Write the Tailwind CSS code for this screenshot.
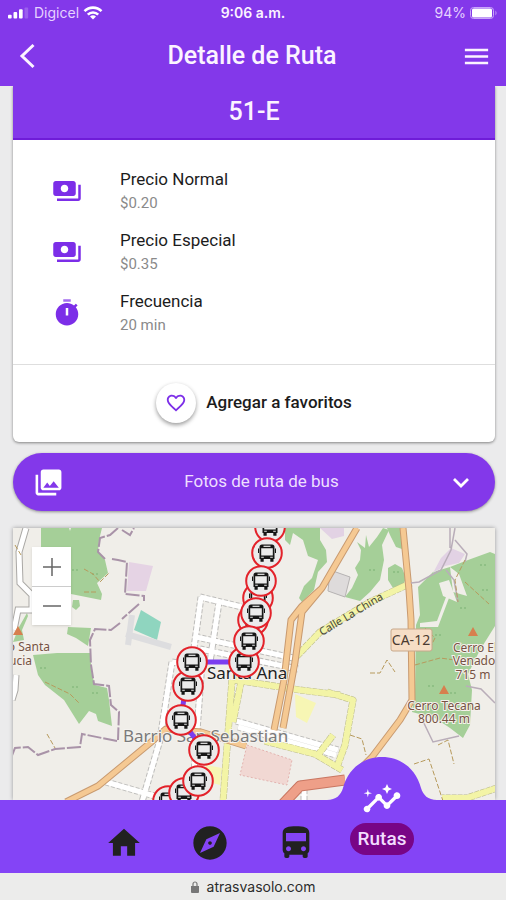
<!DOCTYPE html>
<html lang="es">
  <head>
    <meta charset="UTF-8" />
    <meta name="viewport" content="width=device-width, initial-scale=1.0" />
    <title>Detalle de Ruta</title>
    <script src="https://cdn.jsdelivr.net/npm/@tailwindcss/browser@4"></script>
  </head>
  <body class="bg-[#ebebec] font-['Roboto',sans-serif]">
    <div class="flex flex-col h-screen overflow-hidden">
      <header class="bg-[#8338ea] text-[#fbf3ff] shrink-0">
        <div class="grid grid-cols-3 items-center h-[26px] px-2 font-['Inter',sans-serif] text-sm">
          <div class="flex items-center gap-1 text-[#e6d2ff]">
            <svg class="w-[22px] h-3" viewBox="0 0 24 12" fill="#fff">
              <rect x="0" y="8" width="4" height="4" rx="1" />
              <rect x="6" y="5" width="4" height="7" rx="1" />
              <rect x="12" y="2" width="4" height="10" rx="1" />
              <rect x="18" y="0" width="4" height="12" rx="1" opacity=".2" />
            </svg>
            <span>Digicel</span>
            <svg class="w-5 h-4" viewBox="0 0 20 16" fill="none" stroke="#fff" stroke-width="2.6">
              <path d="M1.500 6.200a12 12 0 0 1 17 0M4.800 9.600a7.400 7.400 0 0 1 10.400 0" />
              <path d="M10 14.600l-3-3a4.300 4.300 0 0 1 6 0z" fill="#fff" stroke="none" />
            </svg>
          </div>
          <span class="text-center font-semibold">9:06 a.m.</span>
          <div class="flex items-center justify-end gap-1 text-[#e6d2ff]">
            <span>94%</span>
            <svg class="w-7 h-3" viewBox="0 0 28 12">
              <rect x=".5" y=".5" width="23" height="11" rx="3" fill="none" stroke="#c9a6fa" />
              <rect x="2" y="1.500" width="20" height="9" rx="1.500" fill="#fff" />
              <path d="M25.500 3.500q2 2.500 0 5z" fill="#c9a6fa" />
            </svg>
          </div>
        </div>
        <div class="flex items-center justify-between h-[60px] pl-3 pr-[14px]">
          <button aria-label="Volver" class="flex items-center justify-center w-8 h-8">
            <svg class="w-8 h-8" viewBox="0 0 32 32" fill="none" stroke="currentColor" stroke-width="3">
              <path d="M21.500 5L10 16l11.500 11" />
            </svg>
          </button>
          <h1 class="text-[25px] font-medium">Detalle de Ruta</h1>
          <button aria-label="Menú" class="flex items-center justify-center w-8 h-8">
            <svg class="w-[31px] h-[31px]" viewBox="0 0 24 24" fill="currentColor">
              <path d="M3 18h18v-2H3v2zm0-5h18v-2H3v2zm0-7v2h18V6H3z" />
            </svg>
          </button>
        </div>
      </header>

      <main class="flex flex-col flex-1 min-h-0 pl-[13px] pr-[11px]">
        <section class="bg-white rounded-b-md shadow-[0_1px_3px_rgba(0,0,0,0.45)] [clip-path:inset(0_-6px_-6px_-6px)]">
          <h2 class="flex items-center justify-center h-[54px] pb-px bg-[#8338ea] border-b-2 border-[#6f1cd8] text-[#fbf3ff] text-[25px] font-medium">51-E</h2>
          <ul class="flex flex-col gap-[13px] h-56 pt-[27px] pl-[39px]">
            <li class="flex items-center gap-[38px]">
              <svg class="w-[30px] h-[30px] text-[#7c2ee8]" viewBox="0 0 24 24" fill="currentColor">
                <path d="M19 14V6c0-1.100-.9-2-2-2H3c-1.100 0-2 .9-2 2v8c0 1.100.9 2 2 2h14c1.100 0 2-.9 2-2zm-9-1c-1.660 0-3-1.340-3-3s1.340-3 3-3 3 1.340 3 3-1.340 3-3 3zm13-6v11c0 1.100-.9 2-2 2H4v-2h17V7h2z" />
              </svg>
              <div>
                <p class="text-[17px] leading-6 text-[#1c1c1c]">Precio Normal</p>
                <p class="text-[15px] leading-6 text-[#8a8a8a]">$0.20</p>
              </div>
            </li>
            <li class="flex items-center gap-[38px]">
              <svg class="w-[30px] h-[30px] text-[#7c2ee8]" viewBox="0 0 24 24" fill="currentColor">
                <path d="M19 14V6c0-1.100-.9-2-2-2H3c-1.100 0-2 .9-2 2v8c0 1.100.9 2 2 2h14c1.100 0 2-.9 2-2zm-9-1c-1.660 0-3-1.340-3-3s1.340-3 3-3 3 1.340 3 3-1.340 3-3 3zm13-6v11c0 1.100-.9 2-2 2H4v-2h17V7h2z" />
              </svg>
              <div>
                <p class="text-[17px] leading-6 text-[#1c1c1c]">Precio Especial</p>
                <p class="text-[15px] leading-6 text-[#8a8a8a]">$0.35</p>
              </div>
            </li>
            <li class="flex items-center gap-[38px]">
              <svg class="w-[30px] h-[30px] text-[#7c2ee8]" viewBox="0 0 24 24" fill="currentColor">
                <path d="M9 1h6v2H9z" opacity=".7" />
                <path fill-rule="evenodd" d="M11 14h2V8h-2v6zm8.030-6.610l1.420-1.420c-.43-.51-.9-.99-1.410-1.410l-1.420 1.420C16.070 4.740 14.120 4 12 4c-4.970 0-9 4.030-9 9s4.020 9 9 9 9-4.030 9-9c0-2.120-.74-4.070-1.970-5.610z" />
              </svg>
              <div>
                <p class="text-[17px] leading-6 text-[#1c1c1c]">Frecuencia</p>
                <p class="text-[15px] leading-6 text-[#8a8a8a]">20 min</p>
              </div>
            </li>
          </ul>
          <div class="flex items-center justify-center h-[78px] pb-0.5 border-t border-[#dedede]">
            <button class="flex items-center gap-[10px] text-[17px] font-medium text-[#1c1c1c]">
              <span class="flex items-center justify-center w-10 h-10 rounded-full bg-white shadow-[0_2px_4px_rgba(0,0,0,0.4)]">
                <svg class="w-[22px] h-[22px] text-[#7c2ee8]" viewBox="0 0 24 24" fill="currentColor">
                  <path d="M16.500 3c-1.740 0-3.410.81-4.500 2.090C10.910 3.810 9.240 3 7.500 3 4.420 3 2 5.420 2 8.500c0 3.780 3.400 6.860 8.550 11.540L12 21.350l1.450-1.320C18.600 15.360 22 12.280 22 8.500 22 5.420 19.580 3 16.500 3zm-4.400 15.550l-.1.100-.1-.1C7.140 14.240 4 11.390 4 8.500 4 6.500 5.500 5 7.500 5c1.540 0 3.040.99 3.570 2.360h1.870C13.460 5.990 14.960 5 16.500 5c2 0 3.500 1.500 3.500 3.500 0 2.890-3.140 5.740-7.900 10.050z" />
                </svg>
              </span>
              Agregar a favoritos
            </button>
          </div>
        </section>

        <button class="flex items-center shrink-0 h-[58px] mt-[11px] px-5 rounded-full bg-[#8338ea] text-[#eedfff] shadow-[0_1px_3px_rgba(0,0,0,0.4)]">
          <svg class="w-[31px] h-[31px]" viewBox="0 0 24 24" fill="#fff">
            <path d="M22 16V4c0-1.100-.9-2-2-2H8c-1.100 0-2 .9-2 2v12c0 1.100.9 2 2 2h12c1.100 0 2-.9 2-2zm-11-4l2.030 2.710L16 11l4 5H8l3-4zM2 6v14c0 1.100.9 2 2 2h14v-2H4V6H2z" />
          </svg>
          <span class="flex-1 pl-3 text-[17px]">Fotos de ruta de bus</span>
          <svg class="w-7 h-7" viewBox="0 0 28 28" fill="none" stroke="#fff" stroke-width="2.800">
            <path d="M7 11l7 7 7-7" />
          </svg>
        </button>

        <div class="relative flex-1 min-h-0 mt-[17px] shadow-[0_0_4px_rgba(0,0,0,0.35)]">
          <svg class="w-full h-full" viewBox="13 528 482 272" preserveAspectRatio="xMidYMid slice" font-family="Noto Sans, sans-serif">
            <defs>
              <g id="stop">
                <circle r="14.800" fill="#ebebeb" stroke="#e3222a" stroke-width="2" />
                <path fill="#161616" fill-rule="evenodd" d="M-5-8.500H5q2.500 0 2.500 2.500V6H-7.500V-6q0-2.500 2.500-2.500zM-5.800-4.800V2.400H5.800V-4.800zM-5.800 3.800v1h2.600v-1zM3.200 3.800v1h2.600v-1z" />
                <path fill="#ebebeb" d="M-3.500-7.300h7v1.200h-7z" />
                <path fill="#161616" d="M-6.500 6h3.200v2.800h-3.200zM3.300 6h3.200v2.800H3.300zM-9-4.500h1v4.500h-1zM8-4.500h1V0H8z" />
              </g>
            </defs>
            <rect x="13" y="528" width="482" height="272" fill="#f0eee9" />

            <!-- forest -->
            <g fill="#a5cf98">
              <path d="M41 528H69L70 531 71 528H102L99 540 98 552 105 560 108 573 97 583 102 594 101 600 71 594V547H41z" />
              <path d="M73 600h6l1 6-4 4-4-3z" />
              <path d="M68 627l23 1-3 18-12-8-9-4z" />
              <path d="M33 655l24-2 33 0 2 22 3 10 12 3 2 12 3 26-14-5-2-7-7-3-10 13-15-24-19-15-7-10z" />
              <path d="M13 642l6-15 8-14 1 3-6 14 2 10z" />
              <path d="M285 528h35v12l6 10 1 12-9 10-4 18-12 12-3-4 5-12 8-8 6-18-10-4-5-16-10-7-3 12-5-5z" />
              <path d="M345 597l7-9 6-13-3-7 5-8 1-10-4-8 8 6 1-13 3 12 8-10 6-9 6 2-7 15 2 15-4 20-10 12-10 9z" />
              <path d="M388 568l7-4 7 4 4 10-3 8-10 2-5-8zM387 528h15l3 22-9-3-6-12z" />
              <path d="M450 567l18-7 22-8 5 2v72l-15 24-12 24 4 16-2 35-7 13-13-10-15-10-23-6 3-22 1-65 4-10-2-28 15-15 17-5 3 25 14 4-8-22z" />
            </g>
            <g fill="none" stroke="#8fc085" stroke-width="2" stroke-dasharray="2 2">
              <path d="M72 570h8M92 574h7M40 668h8M72 687h7M92 693h8M369 570h8M393 572h8M480 565h8M482 590h8M460 608h8M435 635h8M428 686h8M450 693h8" />
            </g>
            <path d="M439 583l10-3 8 22-14-6zM446 597l3 1-11 29h-18v-4l17-2z" fill="#f0eee9" />

            <!-- land use -->
            <path d="M129 562l24 4-7 25-19 0z" fill="#e5d3e4" />
            <path d="M141 610l20 12-4 18-23-10z" fill="#8fd5bf" />
            <path d="M247 745l45 15-5 25-47-10z" fill="#f1d8d3" stroke="#e3b4b0" stroke-dasharray="2 2" />
            <path d="M295 694l21 9-9 20-11-6z" fill="#f7f6b4" />
            <path d="M206 765l16 3-2 17-15-4z" fill="#f7f6b4" />
            <path d="M330 570l20 7-5 20-17-6z" fill="#dedbdb" stroke="#b6b3b3" />
            <path d="M451 548l14 6-6 9-14 3-12 7 8-15zM320 528h24v8l-12 3z" fill="#e2d2e4" />
            <path d="M132 615l-4 30M126 634l45 13" fill="none" stroke="#dddddf" stroke-width="6" />

            <!-- side streets -->
            <g fill="none" stroke="#aaa8a5" stroke-width="7">
              <path d="M26 528l-7 24 1 31 12 12v15H18l-4 20" />
              <path d="M16 675l-1 15-3 10" />
            </g>
            <g fill="none" stroke="#fff" stroke-width="5">
              <path d="M26 528l-7 24 1 31 12 12v15H18l-4 20" />
              <path d="M16 675l-1 15-3 10" />
            </g>
            <g fill="none" stroke="#bdbcba" stroke-width="7" stroke-dasharray="4 2">
              <path d="M200 597l42 10M201 597l-8 58M219 602l-9 60M196 637l102 22M200 649l98 20M172 662l-12 78-18 62M202 662l-10 138M106 782l52 15M172 662l30 5" />
              <path d="M236 721l102 29M238 727l98 28M304 800v-20" />
            </g>
            <g fill="none" stroke="#fff" stroke-width="5">
              <path d="M200 597l42 10M201 597l-8 58M219 602l-9 60M196 637l102 22M200 649l98 20M172 662l-12 78-18 62M202 662l-10 138M106 782l52 15M172 662l30 5" />
              <path d="M236 721l102 29M238 727l98 28M304 800v-20" />
            </g>

            <!-- secondary roads -->
            <g fill="none" stroke-linejoin="round">
              <path d="M411 583l-41 19-50 30-24 25M232 680l-9 122M241 682l-8 40M235 680l65 10 40 5M327 692l26 8-8 45-8 22M265 741l50 13 27 16M497 788l-30 10h-25M318 755l15-20" stroke="#b9b98a" stroke-width="7" stroke-dasharray="5 1" />
              <path d="M411 583l-41 19-50 30-24 25M232 680l-9 122M241 682l-8 40M235 680l65 10 40 5M327 692l26 8-8 45-8 22M265 741l50 13 27 16M497 788l-30 10h-25M318 755l15-20" stroke="#f3f4a6" stroke-width="6" />
            </g>

            <!-- main roads -->
            <g fill="none" stroke-linejoin="round">
              <path d="M66 802l32-16 52-43 16-14 35 3 45 14M357 528l-17 29-18 31-20 18-11 14-7 60-10 50M322 588l-20 24-7 50-12 66M403 528l6 62 2 30 1 80-12 20-28 37-20 20" stroke="#c89a70" stroke-width="7" />
              <path d="M66 802l32-16 52-43 16-14 35 3 45 14M357 528l-17 29-18 31-20 18-11 14-7 60-10 50M322 588l-20 24-7 50-12 66M403 528l6 62 2 30 1 80-12 20-28 37-20 20" stroke="#f5c993" stroke-width="5" />
              <path d="M283 804l17-18 45-6" stroke="#c97762" stroke-width="11" />
              <path d="M283 804l17-18 45-6" stroke="#ee9f88" stroke-width="9" />
            </g>

            <!-- boundaries -->
            <g fill="none" stroke="#a993a8" stroke-width="2" stroke-dasharray="14 2">
              <path d="M118 528l-8 7-10 3-2 14 7 7M112 559l6 1 9 2-2 32 19 2v5M139 604l-17 15M120 623l-9 7-16-1-5 11 1 25 3 19 15 2 2 19 8 7-1 28M117 741l-35-7-2 13-25 2-17 6-10-8-13 1-4 10M122 530l8 5 4-7" />
            </g>
            <g fill="none" stroke="#b9adb9" stroke-width="1.500">
              <path d="M455 528l-4 22-10 20-22 12-8 1M450 528v20M455 540l12 14-2 8M446 570l8 10 4 22M466 686l15 3 14 14M420 715l13 27 26-6" />
            </g>
            <g fill="none" stroke="#b79a5c" stroke-width="1" stroke-dasharray="5 2">
              <path d="M84 569l9 5 7 8 10-10M84 592h14M45 682l25 12 10 10M47 734l8 14M370 673h10l7-13 8 12M15 545l6 10M465 582l24 22M415 665l25-7 30 4M414 764l15-5 10 30 4 12M350 735l12 4 4 16M438 745l10-5 6 24" />
              <path d="M465 560l-10 20 3 22M425 628l10 10-5 10" />
            </g>

            <!-- peaks -->
            <path d="M13 635h10l-5-9zM468 636h10l-5-9zM439 694h10l-5-9z" fill="#d77f4e" />
            <g font-size="12" fill="#765344" stroke="#f5f1ec" stroke-width="2" paint-order="stroke" text-anchor="middle">
              <text x="50" y="651" text-anchor="end">Cerro Santa</text>
              <text x="32" y="665" text-anchor="end">Lucia</text>
              <text x="475" y="652">Cerro El</text>
              <text x="474" y="665">Venado</text>
              <text x="473" y="679">715 m</text>
              <text x="444" y="710">Cerro Tecana</text>
              <text x="444" y="723">800.44 m</text>
            </g>
            <text x="322" y="636" font-size="11" fill="#4a4a3a" transform="rotate(-31 322 636)">Calle La China</text>
            <rect x="391" y="629" width="41" height="22" rx="2" fill="#f6ddc5" stroke="#c8a88a" />
            <text x="411" y="645" font-size="14" fill="#4a3a30" text-anchor="middle">CA-12</text>
            <text x="123" y="742" font-size="17" fill="#7a7a7a" stroke="#f5f3f0" stroke-width="2" paint-order="stroke">Barrio San Sebastian</text>

            <path d="M244 662h-52l-8 36-3 22 23 30" fill="none" stroke="#7b3df0" stroke-width="5" />
            <text x="207" y="679" font-size="17" fill="#222" stroke="#f5f3f0" stroke-width="2" paint-order="stroke">Santa Ana</text>

            <!-- bus stops -->
            <use href="#stop" x="270" y="527" />
            <use href="#stop" x="267" y="553" />
            <use href="#stop" x="258" y="598" />
            <use href="#stop" x="261" y="581" />
            <use href="#stop" x="253" y="620" />
            <use href="#stop" x="256" y="613" />
            <use href="#stop" x="244" y="662" />
            <use href="#stop" x="249" y="641" />
            <use href="#stop" x="188" y="686" />
            <use href="#stop" x="192" y="662" />
            <use href="#stop" x="181" y="720" />
            <use href="#stop" x="204" y="750" />
            <use href="#stop" x="168" y="801" />
            <use href="#stop" x="184" y="793" />
            <use href="#stop" x="198" y="781" />
          </svg>
          <div class="absolute top-[19px] left-[19px] flex flex-col w-[39px] bg-white shadow-sm">
            <button aria-label="Acercar" class="flex items-center justify-center h-10 border-b border-[#ccc]">
              <svg class="w-5 h-5" viewBox="0 0 20 20" stroke="#666" stroke-width="1.500"><path d="M1 10h18M10 1v18" /></svg>
            </button>
            <button aria-label="Alejar" class="flex items-center justify-center h-[38px]">
              <svg class="w-5 h-5" viewBox="0 0 20 20" stroke="#666" stroke-width="1.500"><path d="M1 10h18" /></svg>
            </button>
          </div>
        </div>
      </main>

      <nav class="relative flex justify-center shrink-0 h-[73px] bg-[#8444f6]">
        <div class="grid grid-cols-4 w-[68%] h-full">
          <a href="#" aria-label="Inicio" class="flex items-center justify-center pt-3 text-[#212121]">
            <svg class="w-[38px] h-[38px]" viewBox="0 0 24 24" fill="currentColor"><path d="M10 20v-6h4v6h5v-8h3L12 3 2 12h3v8z" /></svg>
          </a>
          <a href="#" aria-label="Explorar" class="flex items-center justify-center pt-3 text-[#212121]">
            <svg class="w-10 h-10" viewBox="0 0 24 24" fill="currentColor"><path d="M12 10.900c-.61 0-1.100.49-1.100 1.100s.49 1.100 1.100 1.100c.61 0 1.100-.49 1.100-1.100s-.49-1.100-1.100-1.100zM12 2C6.480 2 2 6.480 2 12s4.480 10 10 10 10-4.480 10-10S17.520 2 12 2zm2.190 12.190L6 18l3.810-8.190L18 6l-3.810 8.190z" /></svg>
          </a>
          <a href="#" aria-label="Buses" class="flex items-center justify-center pt-3 text-[#212121]">
            <svg class="w-10 h-10" viewBox="0 0 24 24" fill="currentColor"><path d="M4 16c0 .88.39 1.670 1 2.220V20c0 .55.45 1 1 1h1c.55 0 1-.45 1-1v-1h8v1c0 .55.45 1 1 1h1c.55 0 1-.45 1-1v-1.780c.61-.55 1-1.340 1-2.220V6c0-3.500-3.580-4-8-4s-8 .5-8 4v10zm3.500 1c-.83 0-1.500-.67-1.500-1.500S6.670 14 7.500 14s1.500.67 1.500 1.500S8.330 17 7.500 17zm9 0c-.83 0-1.500-.67-1.500-1.500s.67-1.500 1.500-1.500 1.500.67 1.500 1.500-.67 1.500-1.500 1.500zm1.500-6H6V6h12v5z" /></svg>
          </a>
          <a href="#" class="relative flex items-center justify-center pt-1">
            <!-- raised tab -->
            <svg class="absolute -top-[43px] left-1/2 -translate-x-1/2 w-[110px] h-11" viewBox="0 0 110 44" fill="#8444f6">
              <path d="M0 44V43C9 43 14 38 16 31C21 12 36 0 55 0S89 12 94 31C96 38 101 43 110 43V44z" />
            </svg>
            <svg class="absolute -top-[21px] left-1/2 -translate-x-1/2 w-10 h-10" viewBox="0 0 24 24" fill="#fff">
              <path d="M21 8c-1.450 0-2.260 1.440-1.930 2.510l-3.550 3.560c-.3-.09-.74-.09-1.040 0l-2.550-2.550C12.270 10.450 11.460 9 10 9c-1.450 0-2.270 1.440-1.930 2.520l-4.560 4.550C2.440 15.740 1 16.550 1 18c0 1.100.9 2 2 2 1.450 0 2.260-1.440 1.930-2.510l4.550-4.560c.3.090.74.090 1.040 0l2.550 2.550C12.730 16.550 13.540 18 15 18c1.450 0 2.270-1.440 1.930-2.520l3.560-3.550C21.560 12.260 23 11.450 23 10c0-1.100-.9-2-2-2z" />
              <path d="M15 9l.94-2.070L18 6l-2.060-.93L15 3l-.92 2.070L12 6l2.080.93zM3.500 11L4 9l2-.5L4 8l-.5-2L3 8l-2 .5L3 9z" />
            </svg>
            <span class="px-2 rounded-full bg-[#780586] text-[#f3dcff] text-[19px] font-medium leading-8">Rutas</span>
          </a>
        </div>
      </nav>
      <footer class="flex items-center justify-center gap-2 shrink-0 h-[27px] bg-[#ececeb] text-[#2c2c2c] text-sm font-['Inter',sans-serif]">
        <svg class="w-2 h-3" viewBox="0 0 8 12" fill="#777"><path d="M0 5h8v6q0 1-1 1H1q-1 0-1-1z" /><path d="M2 5V3a2 2 0 0 1 4 0v2" fill="none" stroke="#777" stroke-width="1.200" /></svg>
        <span>atrasvasolo.com</span>
      </footer>
    </div>
  </body>
</html>
